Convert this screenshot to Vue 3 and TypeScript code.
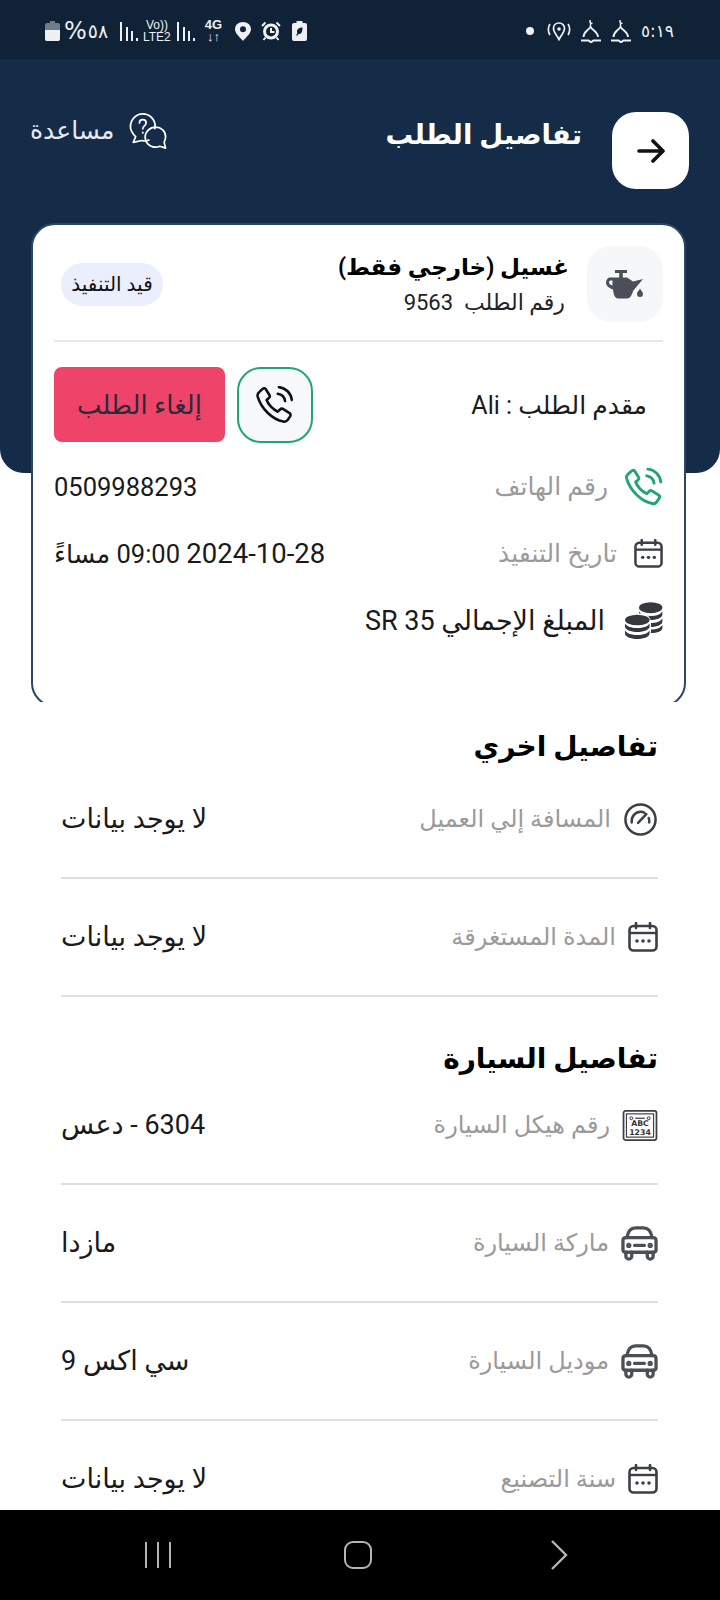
<template>
  <div class="screen" dir="rtl">
    <div class="status-bar" dir="ltr">
      <div class="status-left">
        <svg width="15" height="20" viewBox="0 0 15 20"><path d="M5 0h5v2h3a2 2 0 0 1 2 2v14a2 2 0 0 1-2 2H2a2 2 0 0 1-2-2V4a2 2 0 0 1 2-2h3z" fill="#6f7c8a"/><path d="M0 9h15v9a2 2 0 0 1-2 2H2a2 2 0 0 1-2-2z" fill="#eef0f3"/></svg>
        <span class="st-pct"><b>%</b><i>٥٨</i></span>
        <svg class="bars" width="19" height="19" viewBox="0 0 19 19"><path d="M2 0v19M8 5v14M13 9v10M18 16v3" /></svg>
        <span class="st-net"><b>Vo))</b><b>LTE2</b></span>
        <svg class="bars" width="19" height="19" viewBox="0 0 19 19"><path d="M2 0v19M8 5v14M13 9v10M18 16v3" /></svg>
        <span class="st-net st-4g"><b>4G</b><b>↓↑</b></span>
        <svg class="st-pin" width="16" height="19" viewBox="0 0 16 19"><path fill-rule="evenodd" d="M8 0C3.500 0 0 3 0 7.300 0 11.500 5 15.500 8 19c3-3.500 8-7.500 8-11.700C16 3 12.500 0 8 0zm0 4.300a3 3 0 1 1 0 6 3 3 0 0 1 0-6z" fill="#eef0f3"/></svg>
        <svg width="20" height="20" viewBox="0 0 20 20"><circle cx="10" cy="10.500" r="6.500" fill="#102236" stroke="#eef0f3" stroke-width="3"/><path d="M10 7v4h3.500" fill="none" stroke="#eef0f3" stroke-width="2"/><path d="M1 5l3.500-3.500M19 5l-3.500-3.500M4.500 16.500 2.500 19M15.500 16.500l2 2.500" stroke="#eef0f3" stroke-width="2"/></svg>
        <svg class="st-batt" width="15" height="20" viewBox="0 0 15 20"><path fill-rule="evenodd" d="M4.500 0h6v2h2.500a2 2 0 0 1 2 2v14a2 2 0 0 1-2 2H2a2 2 0 0 1-2-2V4a2 2 0 0 1 2-2h2.500zM10.500 6.500C7.500 6.500 5 8 5 10.500c0 .8.200 1.300.4 1.700L4 14.500h1.500l1-1.500c3 .5 4-2.500 4-6.500z" fill="#eef0f3"/></svg>
      </div>
      <div class="status-right">
        <i class="st-dot"></i>
        <svg width="24" height="19" viewBox="0 0 24 19" fill="none" stroke="#eef0f3"><path d="M12 1c-3.500 0-5.500 2.500-5.500 5.500 0 3.500 3.500 7 5.500 11 2-4 5.500-7.500 5.500-11C17.500 3.500 15.500 1 12 1z" stroke-width="1.700"/><circle cx="12" cy="7" r="1.800" fill="#eef0f3" stroke="none"/><path d="M3 2C.8 5 .8 10 3 13M21 2c2.200 3 2.200 8 0 11" stroke-width="1.700"/></svg>
        <svg v-for="n in 2" :key="n" width="20" height="23" viewBox="0 0 20 23" fill="none" stroke="#eef0f3"><path d="M9.500 0c-1.200 1.500-.5 3.500 2 3.300M9.500 3.500V7" stroke-width="1.500"/><path d="M2.500 17c0-5 4-6 7-10 3 4 7.500 5 7.500 10" stroke-width="1.900"/><path d="M0 20.500h7.500l2.500 1.800 2.500-1.800H20" stroke-width="2"/></svg>
        <span class="st-text">٥:١٩</span>
      </div>
    </div>

    <header class="top">
      <div class="top-row">
        <button class="back">
          <svg width="28" height="24" viewBox="0 0 28 24" fill="none" stroke="#111" stroke-width="3.600" stroke-linecap="round" stroke-linejoin="round"><path d="M2 12h23M16 2l10 10-10 10"/></svg>
        </button>
        <h1 class="page-title">تفاصيل الطلب</h1>
        <div class="help">
          <svg width="38" height="38" viewBox="0 0 40 40" fill="none" stroke="#fff" stroke-width="1.800" stroke-linejoin="round" stroke-linecap="round"><path d="M21 29.500c-2 1-5 1.300-7.500.5L4.500 32l2.500-6C3 22 1.500 19 1.500 15.500 1.500 8 7.500 2 14.500 2s13 5.500 13 13c0 1-.1 1.800-.3 2.500"/><path d="M28 16c6 0 10.500 4 10.500 10 0 2-1 4.500-1.500 6l1.500 6-6-2c-1 .5-3 1-4.500 1-6 0-11-4.500-11-10.500S22 16 28 16z"/><path d="M11 11.500c0-2 1.500-3.500 3.500-3.500s3.500 1.500 3.500 3.500c0 3-3.500 3-3.500 6M14.500 21.500v.5"/></svg>
          <span>مساعدة</span>
        </div>
      </div>
    </header>

    <div class="card-clip">
      <section class="card">
        <div class="card-head">
          <div class="oil-box">
            <svg width="38" height="29" viewBox="0 0 38 29" fill="#4a4f58"><path d="M9 0h12v3h-4.200v5h-3.600V3H9z"/><path fill-rule="evenodd" d="M4 7.500h17l6 4 10-2.500-10 12c-1 4-3 7.500-6 7.500h-9c-3 0-4.500-4-5-9C3 18 0 16 0 12.500 0 9.500 2 7.500 4 7.500zm.5 3c-1 0-1.500 1-1.500 2 0 1.500 1.500 2.500 3.500 3v-5z"/><path d="M34 18.500c1 2 3 3.500 3 5.500a3 3 0 0 1-6 0c0-2 2-3.500 3-5.500z"/></svg>
          </div>
          <div class="head-text">
            <div class="service">غسيل (خارجي فقط)</div>
            <div class="order-no">رقم الطلب &nbsp;9563</div>
          </div>
          <span class="badge">قيد التنفيذ</span>
        </div>

        <div class="requester">
          <span class="req-name">مقدم الطلب : Ali</span>
          <div class="req-actions">
            <button class="call-btn">
              <svg width="38" height="38" viewBox="3 2 33 34" fill="none" stroke="#111" stroke-width="2.300" stroke-linecap="round" stroke-linejoin="round"><path :d="phonePath"/><path d="M22 9c3.500.5 6 3 6.500 6.500M23 3c6 .5 11 5.500 11.500 11.500"/></svg>
            </button>
            <button class="cancel-btn">إلغاء الطلب</button>
          </div>
        </div>

        <div class="info-row">
          <span class="lbl">
            <svg width="38" height="38" viewBox="3 2 33 34" fill="none" stroke="#22a574" stroke-width="2.600" stroke-linecap="round" stroke-linejoin="round"><path :d="phonePath"/><path d="M22 9c3.500.5 6 3 6.500 6.500M23 3c6 .5 11 5.500 11.500 11.500"/></svg>
            <em>رقم الهاتف</em>
          </span>
          <span class="val">0509988293</span>
        </div>
        <div class="info-row">
          <span class="lbl">
            <svg width="29" height="29" viewBox="0 0 30 30"><use href="#cal-icon"/></svg>
            <em>تاريخ التنفيذ</em>
          </span>
          <span class="val"><span class="wide">2024-10-28</span> 09:00 مساءً</span>
        </div>
        <div class="info-row total">
          <svg width="38" height="38" viewBox="0 0 38 38" fill="#35383e">
            <ellipse cx="25.700" cy="5.700" rx="11.700" ry="5.500"/>
            <path d="M14 9.500c2 3 6 4.500 11.700 4.500s9.700-1.500 11.700-4.500v3c0 3-5 5.500-11.700 5.500S14 15.500 14 12.500z"/>
            <path d="M14 16.500c2 3 6 4.500 11.700 4.500s9.700-1.500 11.700-4.500v3c0 3-5 5.500-11.700 5.500S14 22.500 14 19.500z"/>
            <path d="M16 24c2 2 6 3.500 9.700 3.500 5.700 0 9.700-1.500 11.700-4.500v3c0 3-5 5-11.700 5-4 0-8-1-10-3z"/>
            <rect x="-1" y="11.500" width="27" height="27" rx="9" fill="#fff"/>
            <ellipse cx="12.300" cy="18" rx="12.300" ry="5.300"/>
            <path d="M0 21.500c2 3 6 4.500 12.300 4.500s10.300-1.500 12.300-4.500v3c0 3-5.500 5.500-12.300 5.500S0 27.500 0 24.500z"/>
            <path d="M0 28.500c2 3 6 4.500 12.300 4.500s10.300-1.500 12.300-4.500v3c0 3-5.500 5.500-12.300 5.500S0 34.500 0 31.500z"/>
          </svg>
          <span class="total-txt">المبلغ الإجمالي 35 SR</span>
        </div>
      </section>
    </div>

    <main class="details">
      <template v-for="(group, g) in groups" :key="group.title">
        <h2 class="sec-title" :class="{ later: g > 0 }">{{ group.title }}</h2>
        <div v-for="(r, i) in group.rows" :key="r.label" class="d-row" :class="{ 'no-line': i === lastOpen(group) }">
          <span class="lbl">
            <svg v-if="r.icon === 'gauge'" width="35" height="35" viewBox="0 0 36 36" fill="none" stroke="#3b3f46" stroke-width="2.600" stroke-linecap="round"><circle cx="18" cy="18" r="15.500"/><path d="M9 21c-.5-6.500 4-11 9-11 1.500 0 3 .3 4 1M27 21c.2-1.500 0-3-.5-4.500M15.500 21.500 24 12.500"/></svg>
            <svg v-else-if="r.icon === 'cal'" width="30" height="30" viewBox="0 0 30 30"><use href="#cal-icon"/></svg>
            <svg v-else-if="r.icon === 'plate'" width="36" height="31" viewBox="0 0 36 32"><rect x="1" y="1" width="34" height="30" rx="2" fill="none" stroke="#3b3f46" stroke-width="1.800"/><rect x="4" y="4" width="28" height="24" fill="none" stroke="#3b3f46" stroke-width="1.200"/><circle cx="9" cy="8.500" r="1.500" fill="none" stroke="#333"/><circle cx="27" cy="8.500" r="1.500" fill="none" stroke="#333"/><path d="M13 8.500h10" stroke="#333" stroke-width="1.200"/><text x="18" y="17" text-anchor="middle" class="plate-txt" dir="ltr">ABC</text><text x="18" y="25.500" text-anchor="middle" class="plate-txt" dir="ltr">1234</text></svg>
            <svg v-else width="37" height="35" viewBox="0 0 38 36" fill="none" stroke="#4a4f58" stroke-width="3.400" stroke-linejoin="round" stroke-linecap="round"><path d="M6 12c1-6 4-10 9-10h8c5 0 8 4 9 10"/><path d="M2 15c0-2 1-3 3-3h28c2 0 3 1 3 3v10c0 1-1 2-2 2H4c-1 0-2-1-2-2z"/><path d="M5 27v4a3 3 0 0 0 6 0v-4M27 27v4a3 3 0 0 0 6 0v-4"/><path d="M14 20h10"/><circle cx="8" cy="20" r="1" fill="#4a4f58"/><circle cx="30" cy="20" r="1" fill="#4a4f58"/></svg>
            <em>{{ r.label }}</em>
          </span>
          <span class="val d-val">{{ r.value }}</span>
        </div>
      </template>
    </main>

    <nav class="nav-bar" dir="ltr">
      <svg width="26" height="28" viewBox="0 0 26 28" stroke="#b5b5b5" stroke-width="2" fill="none"><path d="M1 1v26M13 1v26M25 1v26"/></svg>
      <svg class="nav-home" width="30" height="30" viewBox="0 0 30 30" fill="none" stroke="#b5b5b5" stroke-width="2"><rect x="2" y="2" width="26" height="26" rx="8"/></svg>
      <svg width="17" height="32" viewBox="0 0 17 32" fill="none" stroke="#b5b5b5" stroke-width="2.400"><path d="M1 2l14 14L1 30"/></svg>
    </nav>

    <svg width="0" height="0" class="defs">
      <symbol id="cal-icon" viewBox="0 0 30 30">
        <path d="M8 1v5M22 1v5" stroke="#3b3f46" stroke-width="2.600" stroke-linecap="round"/>
        <rect x="1.500" y="4" width="27" height="24.500" rx="4" fill="none" stroke="#3b3f46" stroke-width="2.600"/>
        <path d="M2 11h26" stroke="#3b3f46" stroke-width="2.400"/>
        <circle cx="9" cy="19" r="1.800" fill="#3b3f46"/><circle cx="15" cy="19" r="1.800" fill="#3b3f46"/><circle cx="21" cy="19" r="1.800" fill="#3b3f46"/>
      </symbol>
    </svg>
  </div>
</template>

<script setup lang="ts">
type Row = { label: string; value: string; icon: string }
type Group = { title: string; rows: Row[] }

const phonePath =
  'M11 4.500 14.500 10c.6 1 .4 2-.5 2.800l-2 1.700c1 3.500 5.500 8.500 10 10.500l2-2c.9-.9 2-1 3-.3l5.500 3.500c1 .7 1.200 2 .5 3l-2 3c-1 1.300-2.500 2-4 1.600C17 32 7 22 4 11.500c-.4-1.600.2-3.200 1.500-4.200L8 5c1-.9 2.300-1.300 3-.5z'

const groups: Group[] = [
  {
    title: 'تفاصيل اخري',
    rows: [
      { label: 'المسافة إلي العميل', value: 'لا يوجد بيانات', icon: 'gauge' },
      { label: 'المدة المستغرقة', value: 'لا يوجد بيانات', icon: 'cal' },
    ],
  },
  {
    title: 'تفاصيل السيارة',
    rows: [
      { label: 'رقم هيكل السيارة', value: '6304 - دعس', icon: 'plate' },
      { label: 'ماركة السيارة', value: 'مازدا', icon: 'car' },
      { label: 'موديل السيارة', value: 'سي اكس 9', icon: 'car' },
      { label: 'سنة التصنيع', value: 'لا يوجد بيانات', icon: 'cal' },
    ],
  },
]

// the last row of the list runs under the nav bar, its line is never seen
const lastOpen = (g: Group) => (g.title === 'تفاصيل السيارة' ? g.rows.length - 1 : -1)
</script>

<style>
html, body {
  margin: 0;
  background: #fff;
}
</style>

<style scoped>
.screen {
  width: 720px;
  height: 1600px;
  display: flex;
  flex-direction: column;
  overflow: hidden;
  background: #fff;
  font-family: Roboto, "DejaVu Sans", sans-serif;
  color: #111;
}
.defs { position: absolute; }
em { font-style: normal; }
button { border: 0; padding: 0; font-family: inherit; }

.status-bar {
  height: 59px;
  flex: none;
  box-sizing: border-box;
  background: #102236;
  display: flex;
  justify-content: space-between;
  align-items: center;
  padding: 3px 46px 0 45px;
  color: #eef0f3;
}
.status-left, .status-right { display: flex; align-items: center; }
.status-left { gap: 10px; }
.status-right { gap: 10px; }
.st-text { font-size: 17px; font-family: "DejaVu Sans", sans-serif; }
.st-pct { display: flex; align-items: center; gap: 1px; width: 45px; margin-left: -6px; font-family: "DejaVu Sans", sans-serif; }
.st-pct b { font-size: 24px; font-weight: 400; line-height: 24px; }
.st-pct i { font-size: 19px; font-style: normal; }
.bars path { stroke: #eef0f3; stroke-width: 2; fill: none; }
.st-net { display: flex; flex-direction: column; align-items: center; line-height: 12px; margin: 0 -5px; font-family: "Liberation Sans", sans-serif; }
.st-net b { font-size: 12px; font-weight: 400; }
.st-4g { margin: 0; }
.st-4g b { font-weight: 700; font-size: 13px; }
.st-pin { margin-left: 3px; }
.st-batt { margin-left: 1px; }
.st-dot { width: 8px; height: 8px; border-radius: 50%; background: #eef0f3; margin-right: 3px; }

.top {
  height: 414px;
  flex: none;
  background: #152c48;
  border-radius: 0 0 24px 24px;
}
.top-row {
  display: flex;
  align-items: center;
  padding: 53px 31px 0 30px;
}
.back {
  width: 77px;
  height: 77px;
  border-radius: 24px;
  background: #fff;
  display: flex;
  align-items: center;
  justify-content: center;
  flex: none;
}
.page-title {
  margin: -32px 30px 0 0;
  font-size: 27.500px;
  font-weight: 700;
  color: #fff;
  flex: 1;
}
.help {
  display: flex;
  align-items: center;
  gap: 15px;
  margin-top: -40px;
  color: #e6e9ed;
  font-size: 25px;
}

.card-clip {
  margin: -250px 34px 0 31px;
  height: 479px;
  overflow: hidden;
  position: relative;
  flex: none;
}
.card {
  box-sizing: border-box;
  height: 484px;
  background: #fff;
  border: 2px solid #2c4663;
  border-radius: 24px;
  padding: 21px 21px 0;
}
.card-head {
  display: flex;
  align-items: center;
  padding-bottom: 18px;
  border-bottom: 2px solid #e8e8e8;
}
.oil-box {
  width: 76px;
  height: 76px;
  border-radius: 24px;
  background: #f6f7f9;
  display: flex;
  align-items: center;
  justify-content: center;
  flex: none;
}
.head-text { flex: 1; padding-right: 18px; }
.service { font-size: 23px; font-weight: 700; line-height: 36px; color: #000; }
.order-no { font-size: 22px; line-height: 33px; padding-right: 4px; color: #222; }
.badge {
  width: 102px;
  height: 43px;
  border-radius: 22px;
  background: #ebeefc;
  font-size: 20px;
  display: flex;
  align-items: center;
  justify-content: center;
  margin-left: 7px;
}
.requester {
  display: flex;
  justify-content: space-between;
  align-items: center;
  padding: 25px 16px 0 0;
}
.req-name { font-size: 25px; color: #1a1a1a; }
.req-actions { display: flex; gap: 12px; }
.call-btn {
  width: 76px;
  height: 76px;
  box-sizing: border-box;
  border: 2px solid #22a574;
  border-radius: 24px;
  background: #f6f8fa;
  display: flex;
  align-items: center;
  justify-content: center;
}
.cancel-btn {
  width: 171px;
  height: 75px;
  border-radius: 8px;
  background: #ef4469;
  font-size: 26px;
  color: #2a2a3a;
}
.info-row {
  display: flex;
  justify-content: space-between;
  align-items: center;
  height: 67px;
}
.requester + .info-row { margin-top: 10px; }
.info-row.total { justify-content: flex-start; gap: 20px; }
.total-txt { font-size: 27px; color: #1a1a1a; }
.lbl {
  display: flex;
  align-items: center;
  color: #9a9a9a;
}
.info-row .lbl { gap: 17px; font-size: 25px; }
.d-row .lbl { gap: 12px; font-size: 24px; }
.val { font-size: 25.500px; color: #1a1a1a; }
.wide { font-size: 27.500px; }

.details { flex: 1; min-height: 0; overflow: hidden; padding: 0 62px 0 61px; }
.sec-title {
  margin: 0;
  padding-top: 31px;
  line-height: 28px;
  font-size: 28px;
  font-weight: 700;
  color: #000;
}
.sec-title.later { padding-top: 48px; margin-bottom: -6px; }
.d-row {
  height: 116px;
  border-bottom: 2px solid #dfdfdf;
  display: flex;
  justify-content: space-between;
  align-items: center;
}
.d-row.no-line { border-bottom: 0; }
.d-val { font-size: 27px; }
.plate-txt { font-size: 8px; font-weight: 700; fill: #333; font-family: "DejaVu Sans", sans-serif; }

.nav-bar {
  height: 90px;
  flex: none;
  background: #000;
  display: flex;
  align-items: center;
  justify-content: space-between;
  padding: 0 152px 0 145px;
}
.nav-home { margin-right: 6px; }
</style>
